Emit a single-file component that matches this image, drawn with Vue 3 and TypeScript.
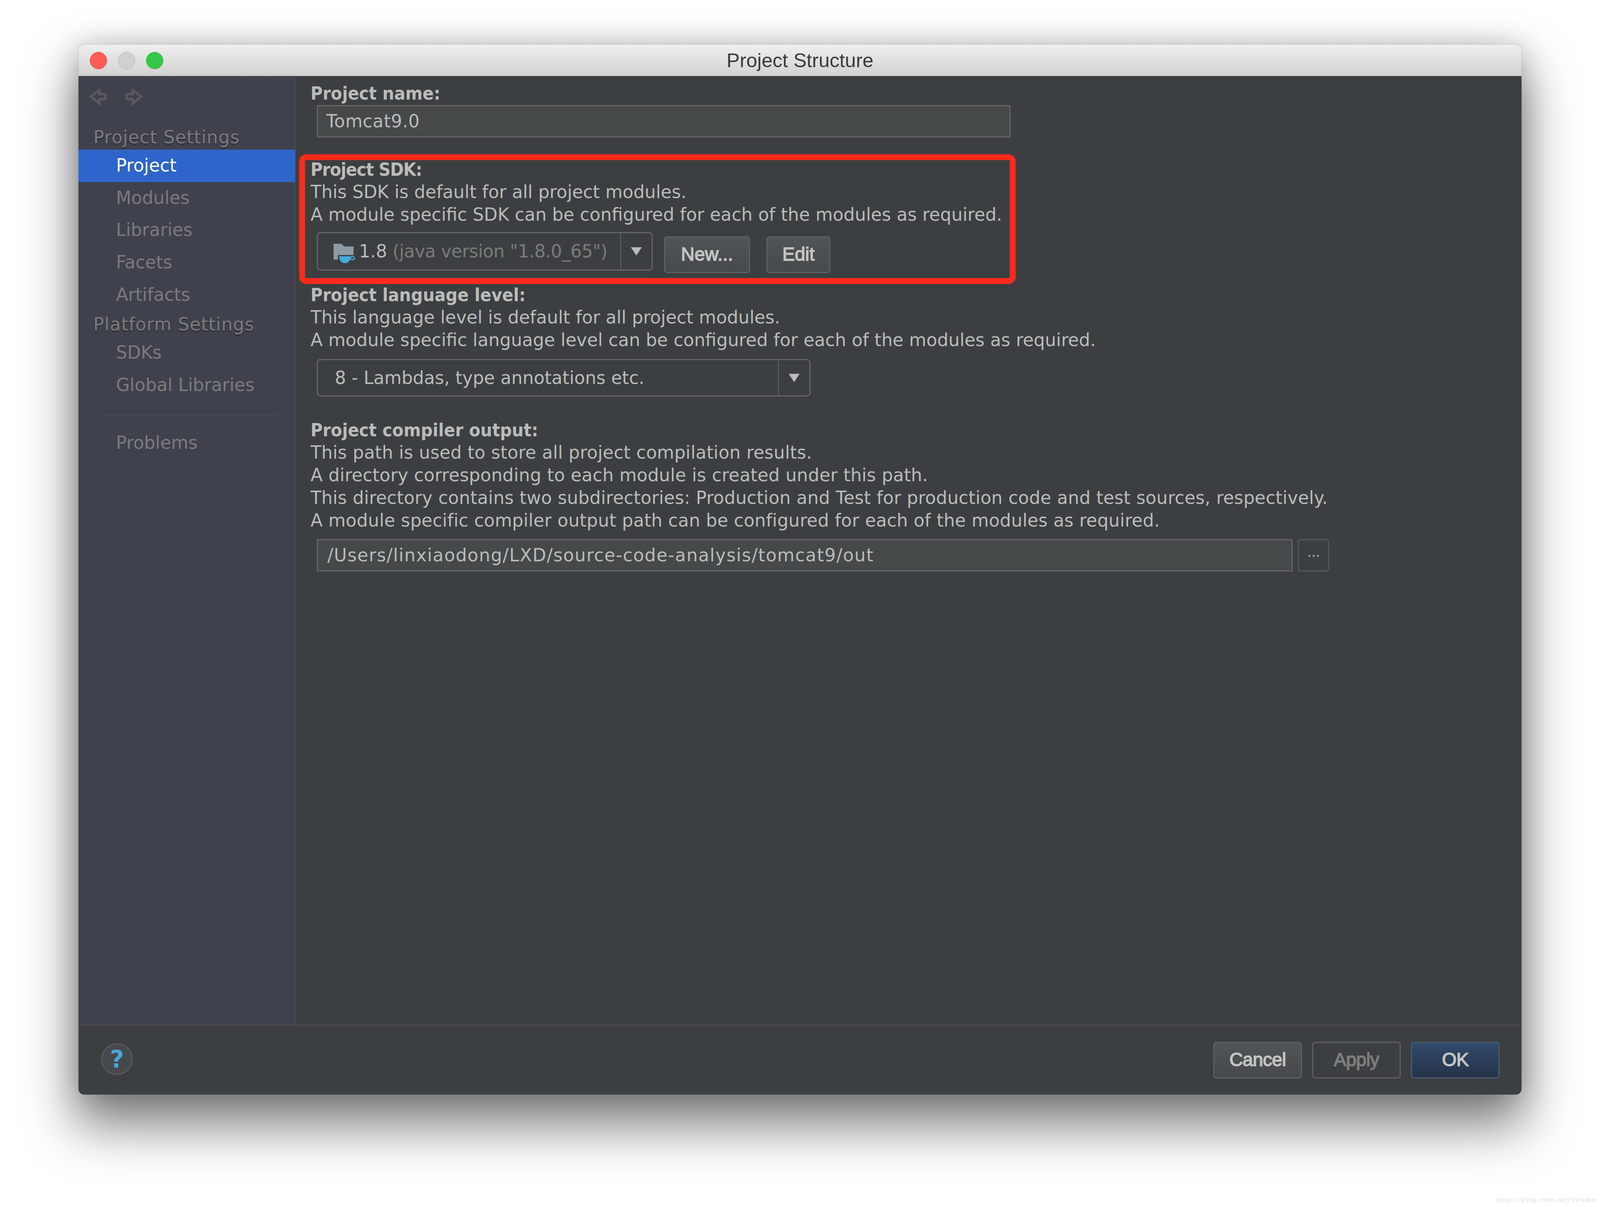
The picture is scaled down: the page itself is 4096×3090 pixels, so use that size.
<script setup lang="ts">
const sdkLines = [
  'This SDK is default for all project modules.',
  'A module specific SDK can be configured for each of the modules as required.',
]
const langLines = [
  'This language level is default for all project modules.',
  'A module specific language level can be configured for each of the modules as required.',
]
const outLines = [
  'This path is used to store all project compilation results.',
  'A directory corresponding to each module is created under this path.',
  'This directory contains two subdirectories: Production and Test for production code and test sources, respectively.',
  'A module specific compiler output path can be configured for each of the modules as required.',
]
</script>

<template>
  <div class="page">
    <div class="window">
      <header class="titlebar">
        <div class="lights">
          <span class="light red"></span>
          <span class="light gray"></span>
          <span class="light green"></span>
        </div>
        <span class="title">Project Structure</span>
      </header>
      <div class="main">
        <aside class="side">
          <div class="nav">
            <svg class="navicon" viewBox="0 0 46 46"><path d="M26 6 5 23l21 18V30h16V17H26Z" /></svg>
            <svg class="navicon" viewBox="0 0 46 46"><path d="M20 6 41 23 20 41V30H4V17h16Z" /></svg>
          </div>
          <div class="head">Project Settings</div>
          <div class="item selected">Project</div>
          <div class="item">Modules</div>
          <div class="item">Libraries</div>
          <div class="item">Facets</div>
          <div class="item">Artifacts</div>
          <div class="head">Platform Settings</div>
          <div class="item">SDKs</div>
          <div class="item">Global Libraries</div>
          <div class="sep"></div>
          <div class="item">Problems</div>
        </aside>
        <section class="content">
          <div class="label first">Project name:</div>
          <div class="field name">Tomcat9.0</div>

          <div class="sdk">
            <div class="label">Project SDK:</div>
            <div v-for="l in sdkLines" :key="l" class="line">{{ l }}</div>
            <div class="sdk-row">
              <div class="combo sdk-combo">
                <div class="combo-text">
                  <svg class="jdk" viewBox="0 0 56 50">
                    <path d="M0 0H20L27 7H51V29H11V40.5H0Z" fill="#8e9ba6" />
                    <path d="M14 32H44C44 42 38 50 29 50C20 50 14 42 14 32Z" fill="#49a9d6" />
                    <ellipse cx="48" cy="37" rx="5.5" ry="3.8" fill="none" stroke="#49a9d6" stroke-width="3" />
                  </svg>
                  <span>1.8</span>
                  <span class="dim">(java version "1.8.0_65")</span>
                </div>
                <div class="arrow"><i></i></div>
              </div>
              <button class="btn new">New...</button>
              <button class="btn edit">Edit</button>
            </div>
            <div class="redbox"></div>
          </div>

          <div class="label lang">Project language level:</div>
          <div v-for="l in langLines" :key="l" class="line">{{ l }}</div>
          <div class="combo lang-combo">
            <div class="combo-text">8 - Lambdas, type annotations etc.</div>
            <div class="arrow"><i></i></div>
          </div>

          <div class="label out">Project compiler output:</div>
          <div v-for="l in outLines" :key="l" class="line out-line">{{ l }}</div>
          <div class="out-row">
            <div class="field path">/Users/linxiaodong/LXD/source-code-analysis/tomcat9/out</div>
            <div class="dots"><b></b><b></b><b></b></div>
          </div>
        </section>
      </div>
      <footer class="footer">
        <div class="help">?</div>
        <div class="actions">
          <button class="fbtn cancel">Cancel</button>
          <button class="fbtn apply">Apply</button>
          <button class="fbtn ok">OK</button>
        </div>
      </footer>
    </div>
    <div class="mark">http://blog.csdn.net/linxdcn</div>
  </div>
</template>

<style>
html, body { margin: 0; background: #fff; }
</style>

<style scoped>
.page {
  position: relative;
  width: 4096px;
  height: 3090px;
  overflow: hidden;
  box-sizing: border-box;
  padding: 114px 0 0 201px;
  background: #fff;
  font-family: "DejaVu Sans", sans-serif;
  color: #bbb;
}
.window {
  width: 3694px;
  height: 2688px;
  display: flex;
  flex-direction: column;
  border-radius: 14px;
  background: #3c3f41;
  box-shadow: 0 0 0 1px rgba(0,0,0,.12), 0 70px 130px 10px rgba(0,0,0,.5), 0 0 70px rgba(0,0,0,.18);
}
.titlebar {
  position: relative;
  height: 81px;
  flex: none;
  display: flex;
  align-items: center;
  justify-content: center;
  border-radius: 14px 14px 0 0;
  background: linear-gradient(#efefef, #d2d2d2);
  border-bottom: 1px solid #8d8d8d;
  box-sizing: border-box;
}
.title {
  font: 50.5px "Liberation Sans", sans-serif;
  color: #3b3b3b;
}
.lights {
  position: absolute;
  left: 29px;
  top: 19px;
  display: flex;
  gap: 28px;
}
.light { width: 44px; height: 44px; border-radius: 50%; box-sizing: border-box; }
.red { background: #fc5b57; border: 1px solid #e2453f; }
.gray { background: #d0d0d0; border: 1px solid #b4b4b4; }
.green { background: #33c748; border: 1px solid #2bae3d; }
.main { flex: 1; display: flex; min-height: 0; }
.side {
  width: 555px;
  flex: none;
  box-sizing: border-box;
  background: #3f424c;
  border-right: 2px solid #4d4f52;
  font-size: 45.3px;
  color: #7b7b7c;
}
.nav { height: 122px; display: flex; gap: 46px; padding: 29px 0 0 27px; box-sizing: border-box; }
.navicon { width: 46px; height: 46px; fill: none; stroke: #57595b; stroke-width: 6; }
.head {
  height: 66px;
  line-height: 69px;
  padding-left: 38px;
  letter-spacing: 1.25px;
  text-shadow: 0 3px 2px #2b2d33;
}
.item {
  height: 82.7px;
  line-height: 82px;
  padding-left: 96px;
  margin-right: -2px;
}
.selected { background: #2f65ca; color: #fff; }
.sep { height: 2px; margin: 33px 45px 30px 55px; background: #4c4f57; }
.content {
  flex: 1;
  min-width: 0;
  padding: 15px 0 0 39px;
  font-size: 45.3px;
}
.label, .line { height: 58px; line-height: 58px; white-space: nowrap; }
.label { font: 700 47px/58px "DejaVu Sans Condensed", "DejaVu Sans", sans-serif; }
.sdk .label { letter-spacing: -1.2px; }
.out-line:nth-of-type(n) { letter-spacing: 0.2px; }
.field {
  box-sizing: border-box;
  background: #45494a;
  border: 3px solid #646464;
  margin-left: 16px;
  white-space: nowrap;
  display: flex;
  align-items: center;
}
.name { width: 1776px; height: 83px; margin-top: 1px; padding-left: 21px; letter-spacing: 0.6px; }
.sdk { position: relative; margin-top: 53px; }
.sdk-row { display: flex; align-items: flex-start; margin-top: 15px; margin-left: 16px; height: 106px; }
.redbox {
  position: absolute;
  left: -29px;
  top: -10px;
  width: 1834px;
  height: 332px;
  box-sizing: border-box;
  border: 15px solid #fe2a1c;
  border-radius: 18px;
}
.combo {
  box-sizing: border-box;
  display: flex;
  border: 3px solid #646464;
  border-radius: 9px;
  background: #3c3f41;
}
.combo-text { flex: 1; min-width: 0; display: flex; align-items: center; white-space: nowrap; }
.arrow { flex: none; border-left: 2px solid #646464; display: flex; align-items: center; justify-content: center; }
.arrow i {
  width: 0; height: 0;
  border-left: 14px solid transparent;
  border-right: 14px solid transparent;
  border-top: 21px solid #bbb;
}
.sdk-combo { width: 860px; height: 99px; }
.sdk-combo .combo-text { padding-left: 40px; }
.sdk-combo .arrow { width: 78px; }
.jdk { width: 56px; height: 50px; flex: none; margin: 10px 9px 0 0; }
.dim { color: #7b7b7b; margin-left: 14px; letter-spacing: -0.5px; }
.btn, .fbtn {
  font-family: "Liberation Sans", sans-serif;
  font-size: 48px;
  -webkit-text-stroke: 1.8px currentColor;
  box-sizing: border-box;
  border: 3px solid #5e6062;
  border-radius: 8px;
  padding: 0 0 3px;
  color: #c4c4c4;
}
.btn {
  height: 94px;
  margin-top: 11px;
  background: linear-gradient(#505557, #46494b);
}
.new { width: 220px; margin-left: 29px; }
.edit { width: 164px; margin-left: 42px; }
.lang { margin-top: 26px; }
.lang-combo { width: 1264px; height: 96px; margin: 19px 0 0 16px; }
.lang-combo .combo-text { padding-left: 43px; }
.lang-combo .arrow { width: 78px; }
.out { margin-top: 57px; }
.out-row { display: flex; gap: 13px; margin-top: 18px; margin-left: 16px; }
.path { width: 2498px; height: 83px; margin-left: 0; padding-left: 24px; letter-spacing: 1.6px; }
.dots {
  width: 81px;
  height: 83px;
  box-sizing: border-box;
  border: 3px solid #54575a;
  border-radius: 8px;
  display: flex;
  align-items: center;
  justify-content: center;
  gap: 7px;
  padding-top: 2px;
}
.dots b { width: 4px; height: 4px; background: #bbb; }
.footer {
  flex: none;
  height: 179px;
  box-sizing: border-box;
  border-top: 3px solid #4d4e50;
  border-radius: 0 0 14px 14px;
  display: flex;
  align-items: flex-start;
  justify-content: space-between;
  padding: 41px 56px 0 58px;
}
.help {
  width: 81px;
  height: 81px;
  margin-top: 4px;
  border-radius: 50%;
  box-sizing: border-box;
  border: 3px solid #585a5c;
  background: #46494b;
  color: #47a5d8;
  font: 700 62px/75px "DejaVu Sans", sans-serif;
  text-align: center;
}
.actions { display: flex; gap: 26px; }
.fbtn { width: 227px; height: 94px; letter-spacing: -0.8px; }
.cancel { background: linear-gradient(#505557, #46494b); }
.apply { background: #3c3f41; color: #7d7d7d; }
.ok { background: linear-gradient(#314a6b, #253349); border-color: #4a5a70; }
.mark {
  position: absolute;
  right: 11px;
  bottom: 8px;
  font: 15px "Liberation Mono", monospace;
  color: #dcdcdc;
}
</style>
